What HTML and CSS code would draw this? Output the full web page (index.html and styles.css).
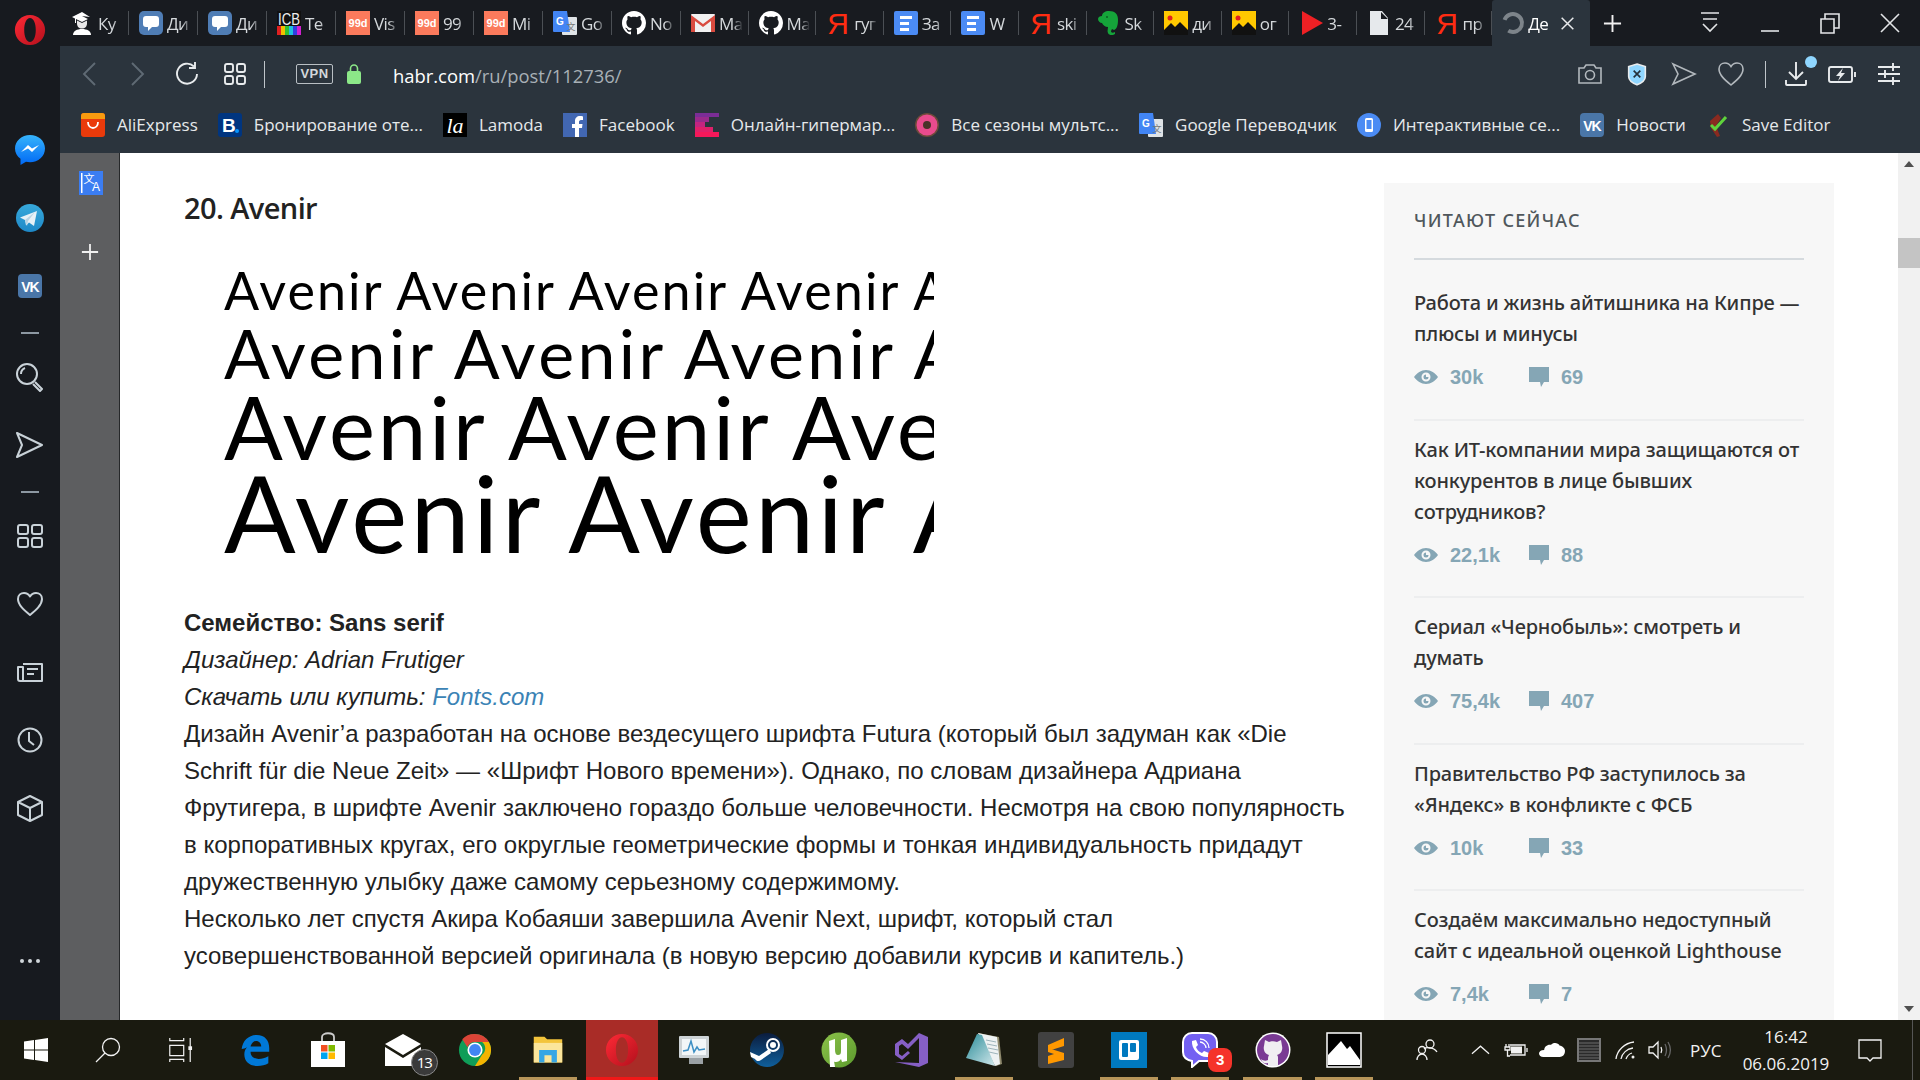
FILE: index.html
```html
<!DOCTYPE html>
<html lang="ru">
<head>
<meta charset="utf-8">
<title>Habr</title>
<link rel="stylesheet" href="styles.css">
</head>
<body>
<svg class="defs" aria-hidden="true">
  <defs>
    <linearGradient id="g-op" x1="0" y1="0" x2="1" y2="1"><stop offset="0" stop-color="#ff2a36"/><stop offset="1" stop-color="#b3101c"/></linearGradient>
    <linearGradient id="g-ms" x1="0" y1="0" x2="0" y2="1"><stop offset="0" stop-color="#36b4fb"/><stop offset="1" stop-color="#0068f5"/></linearGradient>
    <linearGradient id="g-tg" x1="0" y1="0" x2="0" y2="1"><stop offset="0" stop-color="#37a9db"/><stop offset="1" stop-color="#1e88c7"/></linearGradient>
    <linearGradient id="g-st" x1="0" y1="0" x2="0" y2="1"><stop offset="0" stop-color="#0b1c3d"/><stop offset="1" stop-color="#0f5f9c"/></linearGradient>
    <linearGradient id="g-ut" x1="0" y1="0" x2="1" y2="1"><stop offset="0" stop-color="#8cc24a"/><stop offset="1" stop-color="#5c9a2d"/></linearGradient>
    <linearGradient id="g-np" x1="0" y1="0" x2="1" y2="1"><stop offset="0" stop-color="#2a8c98"/><stop offset="1" stop-color="#d2e8ec"/></linearGradient>
    <symbol id="opera" viewBox="0 0 36 36"><path fill="url(#g-op)" fill-rule="evenodd" d="M18 1C8.500 1 1 8.600 1 18s7.500 17 17 17 17-7.600 17-17S27.500 1 18 1zm0 3.500c4 0 6.500 6 6.500 13.500S22 31.500 18 31.500 11.500 25.500 11.500 18 14 4.500 18 4.500z"/></symbol>
    <symbol id="student" viewBox="0 0 24 24"><path fill="#fff" d="M12 1 2 6l3 1.500V12h1V8l6 3 6-3-6-3 8 1z"/><path fill="#e8e8e8" d="M7 9.500v3c0 3 2 5 5 5s5-2 5-5v-3l-5 2.500z"/><path fill="#fff" d="M3 24c0-4 4-6 9-6s9 2 9 6z"/></symbol>
    <symbol id="chat" viewBox="0 0 24 24"><rect width="24" height="24" rx="5" fill="#4f7db5"/><path fill="#fff" d="M7 5h10a3 3 0 0 1 3 3v5a3 3 0 0 1-3 3h-4l-4 4v-4H7a3 3 0 0 1-3-3V8a3 3 0 0 1 3-3z"/></symbol>
    <symbol id="icb" viewBox="0 0 24 24"><rect width="24" height="24" fill="#111"/><text x="1" y="14" class="svg-t icb-t" textLength="22" lengthAdjust="spacingAndGlyphs">ICB</text><rect y="15" width="4" height="9" fill="#e02020"/><rect x="4" y="15" width="4" height="9" fill="#f0c000"/><rect x="8" y="15" width="4" height="9" fill="#30c030"/><rect x="12" y="15" width="4" height="9" fill="#20c0e0"/><rect x="16" y="15" width="4" height="9" fill="#3040e0"/><rect x="20" y="15" width="4" height="9" fill="#d020d0"/></symbol>
    <symbol id="d99" viewBox="0 0 24 24"><rect width="24" height="24" fill="#fb7a5c"/><text x="12" y="16" class="svg-t d99-t" text-anchor="middle">99d</text></symbol>
    <symbol id="gt" viewBox="0 0 24 24"><rect x="9" y="6" width="15" height="18" rx="1" fill="#dfe3e6"/><path fill="#4285f4" d="M1 0h13l3 21H1a1 1 0 0 1-1-1V1a1 1 0 0 1 1-1z"/><text x="7" y="14" class="svg-t gt-t" text-anchor="middle">G</text><text x="18" y="19" class="svg-t gt2-t" text-anchor="middle">文</text></symbol>
    <symbol id="gh" viewBox="0 0 16 16"><path fill="#fff" fill-rule="evenodd" d="M8 0C3.580 0 0 3.580 0 8c0 3.540 2.290 6.530 5.470 7.590.4.070.55-.17.55-.38 0-.19-.01-.82-.01-1.490-2.010.370-2.530-.49-2.690-.94-.09-.23-.48-.94-.82-1.130-.28-.15-.68-.52-.01-.53.63-.01 1.080.58 1.230.82.72 1.210 1.870.87 2.330.66.07-.52.28-.87.51-1.070-1.780-.2-3.640-.89-3.640-3.950 0-.87.31-1.590.82-2.150-.08-.2-.36-1.020.08-2.120 0 0 .67-.21 2.200.82.64-.18 1.320-.27 2-.27.68 0 1.360.09 2 .27 1.530-1.040 2.200-.82 2.200-.82.44 1.100.16 1.920.08 2.120.51.56.82 1.270.82 2.150 0 3.070-1.870 3.750-3.650 3.950.29.25.54.73.54 1.480 0 1.070-.01 1.930-.01 2.200 0 .21.15.46.55.38A8.013 8.013 0 0 0 16 8c0-4.420-3.580-8-8-8z"/></symbol>
    <symbol id="gmail" viewBox="0 0 24 24"><rect y="3" width="24" height="18" rx="1" fill="#f1f1f1"/><path fill="#d94b3f" d="M0 4l12 9 12-9v17h-4V10l-8 6-8-6v11H0z"/></symbol>
    <symbol id="ya" viewBox="0 0 24 24"><text x="12" y="23" class="svg-t ya-t" text-anchor="middle">Я</text></symbol>
    <symbol id="doc" viewBox="0 0 24 24"><rect width="24" height="24" rx="2" fill="#4b8bf4"/><path fill="#fff" d="M6 5h12v3H6zM6 11h9v3H6zM6 17h9v3H6z"/></symbol>
    <symbol id="ever" viewBox="0 0 24 24"><path fill="#15a43a" d="M5 5c0-3 3-5 7-5 6 0 9 3 9 9 0 5-1 9-4 10l-2-1-1 2c0 2 2 2 4 1v2c-1 1-6 2-7-1-1-2 0-4 0-6-3 0-5-2-6-4-2 0-4-2-4-4 0-2 2-3 4-3z"/><circle cx="10" cy="6" r="1" fill="#0a5c20"/></symbol>
    <symbol id="pic" viewBox="0 0 24 24"><rect width="24" height="24" fill="#ffc800"/><circle cx="6" cy="7" r="2.500" fill="#e02020"/><path fill="#111" d="M0 19l7-7 4 4 5-5 8 8v5H0z"/></symbol>
    <symbol id="play" viewBox="0 0 24 24"><path fill="#ee2024" d="M3 0l21 12L3 24z"/></symbol>
    <symbol id="file" viewBox="0 0 24 24"><path fill="#e6e9ec" d="M3 0h12l6 7v17H3zM14 1v7h7z" fill-rule="evenodd"/></symbol>
    <symbol id="ali" viewBox="0 0 24 24"><rect width="24" height="24" rx="3" fill="#ea3a0b"/><path fill="#f99b0f" d="M0 3a3 3 0 0 1 3-3h18a3 3 0 0 1 3 3v3H0z"/><path fill="none" stroke="#fff" stroke-width="1.800" d="M7 9c0 8 10 8 10 0"/></symbol>
    <symbol id="book" viewBox="0 0 24 24"><rect width="24" height="24" rx="3" fill="#003580"/><text x="4" y="19" class="svg-t book-t">B</text><circle cx="19" cy="18" r="2" fill="#0896ff"/></symbol>
    <symbol id="lam" viewBox="0 0 24 24"><rect width="24" height="24" fill="#000"/><text x="12" y="20" class="svg-t lam-t" text-anchor="middle">la</text></symbol>
    <symbol id="fb" viewBox="0 0 24 24"><rect width="24" height="24" fill="#4267b2"/><path fill="#fff" d="M16 24v-9h3l.5-4H16V9c0-1 .5-2 2-2h2V3.500C19 3 18 3 17 3c-3 0-5 2-5 5v3H9v4h3v9z"/></symbol>
    <symbol id="hyper" viewBox="0 0 24 24"><path fill="#7b2d96" d="M0 0h24v4H0z"/><path fill="#9a2a8c" d="M0 4h14v5H0z"/><path fill="#c42480" d="M0 9h10v5H0z"/><path fill="#e0206a" d="M0 14h18v5H0z"/><path fill="#f5185a" d="M0 19h24v5H0z"/></symbol>
    <symbol id="donut" viewBox="0 0 24 24"><circle cx="12" cy="12" r="12" fill="#6d4a3a"/><circle cx="12" cy="12" r="10.500" fill="#e84b8d"/><circle cx="12" cy="12" r="4" fill="#4a3228"/></symbol>
    <symbol id="phone" viewBox="0 0 24 24"><circle cx="12" cy="12" r="12" fill="#4b8bf4"/><rect x="8" y="5" width="8" height="14" rx="1.500" fill="#fff"/><rect x="9.500" y="7" width="5" height="9" fill="#4b8bf4"/></symbol>
    <symbol id="vk" viewBox="0 0 24 24"><rect width="24" height="24" rx="4" fill="#4a76a8"/><text x="12" y="17.500" class="svg-t vk-t" text-anchor="middle">VK</text></symbol>
    <symbol id="save" viewBox="0 0 24 24"><path fill="#8a2a20" d="M4 8l8-7 3 4-5 8 4 10-3 1-6-9z"/><path fill="none" stroke="#5fd33c" stroke-width="3" d="M5 12l4 4L20 4"/></symbol>
    <symbol id="win" viewBox="0 0 24 24"><path fill="#fff" d="M0 3.500 10 2v9.500H0zM11 2l13-2v11.500H11zM0 12.500h10V22L0 20.500zM11 12.500h13V24l-13-2z"/></symbol>
    <symbol id="edge" viewBox="0 0 36 36"><path fill="#0078d7" d="M3 17C4 7 11 1 20 1c9 0 14 6 14 15v4H13c0 6 5 8 9 8 4 0 7-1 11-3v8c-3 2-8 3-12 3-9 0-15-5-15-13 0-3 1-6 3-8-2 1-4 2-6 2zM13 14h12c0-3-2-6-6-6-3 0-5 3-6 6z"/></symbol>
    <symbol id="store" viewBox="0 0 36 36"><path fill="none" stroke="#ccc" stroke-width="1.800" d="M12 9V5c0-5 12-5 12 0v4"/><path fill="#fff" d="M1 9h34v26H1z"/><path fill="#f25022" d="M11 13h6.500v6.500H11z"/><path fill="#7fba00" d="M18.500 13H25v6.500h-6.500z"/><path fill="#00a4ef" d="M11 20.500h6.500V27H11z"/><path fill="#ffb900" d="M18.500 20.500H25V27h-6.500z"/></symbol>
    <symbol id="mail" viewBox="0 0 36 36"><path fill="#fff" d="M0 12 18 2l18 10-18 11z"/><path fill="#fff" d="M0 15l18 11 18-11v19H0z"/></symbol>
    <symbol id="chrome" viewBox="0 0 36 36"><circle cx="18" cy="18" r="17" fill="#0f9d58"/><path fill="#db4437" d="M18 1a17 17 0 0 1 14.700 8.500H18a8.500 8.500 0 0 0-8 5.500L4.500 6.500A17 17 0 0 1 18 1z"/><path fill="#f4b400" d="M32.700 9.500A17 17 0 0 1 18 35l7.500-12a8.500 8.500 0 0 0 0-13.500z"/><circle cx="18" cy="18" r="8" fill="#fff"/><circle cx="18" cy="18" r="6.300" fill="#4285f4"/></symbol>
    <symbol id="folder" viewBox="0 0 36 36"><path fill="#f3c43b" d="M2 3h12l3 3h17v26H2z"/><path fill="#fbe59b" d="M2 10h32v22H2z"/><path fill="#37a6e4" d="M8 18h20v14h-6v-8h-8v8H8z"/></symbol>
    <symbol id="tm" viewBox="0 0 36 36"><rect x="2" y="4" width="30" height="22" rx="1" fill="#cdd3d6"/><rect x="5" y="7" width="24" height="16" fill="#f2f6f8"/><path fill="none" stroke="#3d8fc4" stroke-width="1.500" d="M6 19l5-1 3-9 3 11 3-5 2 3 6-1"/><rect x="12" y="26" width="14" height="6" fill="#9aa0a4"/></symbol>
    <symbol id="steam" viewBox="0 0 36 36"><circle cx="18" cy="18" r="17" fill="url(#g-st)"/><circle cx="24" cy="13" r="6" fill="none" stroke="#fff" stroke-width="2"/><circle cx="24" cy="13" r="3" fill="#fff"/><path fill="#fff" d="M1 20l9 4 10-7 2 4-10 7c-2 2-5 1-6-1l-4-2z"/></symbol>
    <symbol id="ut" viewBox="0 0 36 36"><circle cx="18" cy="18" r="17.500" fill="url(#g-ut)"/><path fill="#fff" d="M8 9l6-2v11c0 3 1 5 3 5s3-1 3-4V8l6-2v23l-5 1-1-3c-1 2-3 3-5 3-1 0-2 0-2-1l1 6h-5z"/></symbol>
    <symbol id="vs" viewBox="0 0 36 36"><path fill="#865fc5" d="M25 1l9 4v26l-9 4L1 30l24 1V6L14 17l-6-5-3 2v8l3 2 6-5 2 2-8 7-7-5V12l7-5 6 5z"/></symbol>
    <symbol id="np" viewBox="0 0 36 36"><path fill="#8f8a6e" d="M12 1l21 4 3 27-6 2z"/><path fill="#eef2f3" d="M12 1l19 4 3 27-5 2z"/><path stroke="#9db4bb" stroke-width="1" d="M20 8l10 2M21 12l10 2M22 16l10 2M23 20l9 2"/><path fill="url(#g-np)" d="M11 2l5 1 13 31L0 26z"/></symbol>
    <symbol id="subl" viewBox="0 0 36 36"><rect width="36" height="36" rx="3" fill="#414141"/><path fill="#ff9800" d="M26 6v8L10 19v-6zM10 16l16 5v7l-16 4v-8l6-2-6-2z"/></symbol>
    <symbol id="trello" viewBox="0 0 36 36"><rect width="36" height="36" fill="#0079bf"/><rect x="8" y="8" width="20" height="20" rx="2" fill="#fff"/><rect x="11" y="11" width="6" height="14" rx="1" fill="#0079bf"/><rect x="19" y="11" width="6" height="9" rx="1" fill="#0079bf"/></symbol>
    <symbol id="viber" viewBox="0 0 36 36"><path fill="#7360f2" stroke="#fff" stroke-width="2" d="M10 1h16c5 0 9 4 9 9v10c0 5-4 9-9 9h-9l-7 6v-6c-5-1-9-4-9-9V10c0-5 4-9 9-9z"/><path fill="#fff" d="M10 9l4-1 2 5-2 2c1 3 3 5 6 6l2-2 5 2-1 4c-8 1-17-8-16-16z"/><path fill="none" stroke="#fff" stroke-width="1.300" d="M18 7c5 0 9 4 9 9M18 10c3 0 6 3 6 6"/></symbol>
    <symbol id="ghp" viewBox="0 0 36 36"><circle cx="18" cy="18" r="17.500" fill="#fff"/><circle cx="18" cy="18" r="16" fill="#7a3a94"/><path fill="#f0eef2" d="M10 8l4 2c3-1 5-1 8 0l4-2 1 6c1 4-1 8-5 9 1 1 1 2 1 3v8h-10v-3c-3 1-6 0-7-4 2 2 5 2 7 1 0-2 0-3 1-5-4-1-6-5-5-9z"/></symbol>
    <symbol id="photo" viewBox="0 0 36 36"><rect x="1" y="1" width="34" height="34" fill="#000" stroke="#fff" stroke-width="1.500"/><path fill="#fff" d="M2 33V23L15 9l6 8 3-3 10 14v5z"/></symbol>
    <symbol id="eye" viewBox="0 0 24 16"><path fill="#85a6b5" fill-rule="evenodd" d="M12 1C7 1 3 4 0 8c3 4 7 7 12 7s9-3 12-7c-3-4-7-7-12-7zm0 2.500a4.500 4.500 0 1 1 0 9 4.500 4.500 0 0 1 0-9z"/><path fill="#85a6b5" d="M12 5.500a2.500 2.500 0 1 0 2.500 2.500H12z"/></symbol>
    <symbol id="cmt" viewBox="0 0 20 20"><path fill="#85a6b5" d="M0 0h20v15h-5l-3 5-1-5H0z"/></symbol>
  </defs>
</svg>

<div class="app">
  <div class="main">
    <aside class="sidebar">
      <svg class="side-opera"><use href="#opera"/></svg>
      <svg class="side-ico" viewBox="0 0 30 30"><path fill="url(#g-ms)" d="M15 0C6.700 0 0 6 0 13.500c0 4.300 2 7.800 5.500 10.200V30l5.500-3.200c1.300.3 2.700.4 4 .4 8.300 0 15-6 15-13.700S23.300 0 15 0z"/><path fill="#fff" d="M6 17l7-7 4 3.500L24 10l-7 7-4-3.500z"/></svg>
      <svg class="side-ico" viewBox="0 0 30 30"><circle cx="15" cy="15" r="14" fill="url(#g-tg)"/><path fill="#e6f1f7" d="M5 14.500 22 8l-3 15-5-3.500-3 3-1-5.500z"/><path fill="#b8d3e4" d="M10 17l10-8-7 9-1 5z"/></svg>
      <svg class="side-ico" viewBox="-3 -3 30 30"><use href="#vk" width="24" height="24"/></svg>
      <span class="side-dash"></span>
      <svg class="side-ico stroke" viewBox="0 0 30 30"><circle cx="12" cy="12" r="10"/><path d="M6 12c0-3 1.500-5 4-6M20 20l7 7-2 2-7-7"/></svg>
      <svg class="side-ico stroke" viewBox="0 0 30 30"><path d="M2 3l25 12L2 27l5-12z"/></svg>
      <span class="side-dash"></span>
      <svg class="side-ico stroke" viewBox="0 0 30 30"><rect x="3" y="4" width="10" height="9" rx="2"/><rect x="17" y="4" width="10" height="9" rx="2"/><rect x="3" y="17" width="10" height="9" rx="2"/><rect x="17" y="17" width="10" height="9" rx="2"/></svg>
      <svg class="side-ico stroke" viewBox="0 0 30 30"><path d="M15 26C9 21 3 16 3 10c0-4 3-6 6-6 2.500 0 4.500 1 6 3.500C16.500 5 18.500 4 21 4c3 0 6 2 6 6 0 6-6 11-12 16z"/></svg>
      <svg class="side-ico stroke" viewBox="0 0 30 30"><path d="M8 7h19v17H5a2 2 0 0 1-2-2V10h5v14M12 12h11M12 17h7"/></svg>
      <svg class="side-ico stroke" viewBox="0 0 30 30"><circle cx="15" cy="15" r="11.500"/><path d="M14 7v9l5 4"/></svg>
      <svg class="side-ico stroke" viewBox="0 0 30 30"><path d="M15 3l12 6v13l-12 6-12-6V9zM3 9l12 6 12-6M15 15v13"/></svg>
      <span class="side-dots"><i></i><i></i><i></i></span>
    </aside>

    <div class="browser">
      <div class="tabstrip">
        <div class="tab"><svg class="ti"><use href="#student"/></svg><span class="tt">Ку</span></div>
        <div class="tab"><svg class="ti"><use href="#chat"/></svg><span class="tt">Ди</span></div>
        <div class="tab"><svg class="ti"><use href="#chat"/></svg><span class="tt">Ди</span></div>
        <div class="tab"><svg class="ti"><use href="#icb"/></svg><span class="tt">Te</span></div>
        <div class="tab"><svg class="ti"><use href="#d99"/></svg><span class="tt">Vis</span></div>
        <div class="tab"><svg class="ti"><use href="#d99"/></svg><span class="tt">99</span></div>
        <div class="tab"><svg class="ti"><use href="#d99"/></svg><span class="tt">Mi</span></div>
        <div class="tab"><svg class="ti"><use href="#gt"/></svg><span class="tt">Go</span></div>
        <div class="tab"><svg class="ti"><use href="#gh"/></svg><span class="tt">No</span></div>
        <div class="tab nar"><svg class="ti"><use href="#gmail"/></svg><span class="tt">Ma</span></div>
        <div class="tab nar"><svg class="ti"><use href="#gh"/></svg><span class="tt">Ma</span></div>
        <div class="tab nar"><svg class="ti"><use href="#ya"/></svg><span class="tt">гуг</span></div>
        <div class="tab nar"><svg class="ti"><use href="#doc"/></svg><span class="tt">За</span></div>
        <div class="tab nar"><svg class="ti"><use href="#doc"/></svg><span class="tt">W</span></div>
        <div class="tab nar"><svg class="ti"><use href="#ya"/></svg><span class="tt">ski</span></div>
        <div class="tab nar"><svg class="ti"><use href="#ever"/></svg><span class="tt">Sk</span></div>
        <div class="tab nar"><svg class="ti"><use href="#pic"/></svg><span class="tt">ди</span></div>
        <div class="tab nar"><svg class="ti"><use href="#pic"/></svg><span class="tt">ог</span></div>
        <div class="tab nar"><svg class="ti"><use href="#play"/></svg><span class="tt">3-</span></div>
        <div class="tab nar"><svg class="ti"><use href="#file"/></svg><span class="tt">24</span></div>
        <div class="tab nar"><svg class="ti"><use href="#ya"/></svg><span class="tt">пр</span></div>
        <div class="tab-active">
          <svg class="ti" viewBox="0 0 24 24"><circle cx="12" cy="12" r="9" fill="none" stroke="#7d848a" stroke-width="4" stroke-dasharray="44 13" transform="rotate(200 12 12)"/></svg>
          <span class="tt">Де</span>
          <svg class="tx" viewBox="0 0 18 18"><path d="M2 2l14 14M16 2 2 16"/></svg>
        </div>
        <svg class="newtab" viewBox="0 0 20 20"><path d="M10 1v18M1 10h18"/></svg>
        <div class="winctl">
          <span class="wc"><svg viewBox="0 0 20 24"><path d="M1 2h18M3 8h14M3 13l7 7 7-7"/></svg></span>
          <span class="wc"><svg viewBox="0 0 20 24"><path d="M1 20h18"/></svg></span>
          <span class="wc"><svg viewBox="0 0 20 24"><path d="M1 8h13v14H1zM5 8V3h14v14h-5"/></svg></span>
          <span class="wc"><svg viewBox="0 0 20 24"><path d="M1 3l18 18M19 3 1 21"/></svg></span>
        </div>
      </div>

      <div class="toolbar">
        <div class="addr">
          <svg class="tb back dim" viewBox="0 0 30 30"><path d="M20 4 9 15l11 11"/></svg>
          <svg class="tb fwd dim" viewBox="0 0 30 30"><path d="M10 4l11 11-11 11"/></svg>
          <svg class="tb rel" viewBox="0 0 30 30"><path d="M25 15a10 10 0 1 1-3-7.500M23 3v6h-6"/></svg>
          <svg class="tb grid" viewBox="0 0 30 30"><rect x="5" y="5" width="8" height="8" rx="2"/><rect x="17" y="5" width="8" height="8" rx="2"/><rect x="5" y="17" width="8" height="8" rx="2"/><rect x="17" y="17" width="8" height="8" rx="2"/></svg>
          <span class="vsep first"></span>
          <span class="vpn">VPN</span>
          <svg class="lock" viewBox="0 0 14 20"><path fill="none" stroke="#8ce888" stroke-width="1.600" d="M3.500 8V4.500a3.500 3.500 0 0 1 7 0V8"/><rect y="7" width="14" height="13" rx="2" fill="#8ce888"/></svg>
          <span class="url"><b>habr.com</b>/ru/post/112736/</span>
          <div class="addr-right">
            <svg class="tb grey" viewBox="0 0 30 30"><path d="M4 9h5l2-3h8l2 3h5v15H4z"/><circle cx="15" cy="16" r="4.500"/></svg>
            <svg class="tb noline" viewBox="-3 -3 36 36"><path fill="#8fd6ff" d="M15 3l10 3v12c0 5-5 8-10 10C10 26 5 23 5 18V6z"/><path fill="none" stroke="#24303a" stroke-width="2" d="M11 11l8 8M19 11l-8 8"/></svg>
            <svg class="tb grey" viewBox="0 0 30 30"><path d="M4 5l22 10L4 25l5-10z"/></svg>
            <svg class="tb grey" viewBox="0 0 30 30"><path d="M15 26C9 21 3 16 3 10c0-4 3-6 6-6 2.500 0 4.500 1 6 3.500C16.500 5 18.500 4 21 4c3 0 6 2 6 6 0 6-6 11-12 16z"/></svg>
            <span class="vsep second"></span>
            <span class="dl"><svg class="tb" viewBox="0 0 30 30"><path d="M15 3v16M8 13l7 7 7-7M5 21v4a1 1 0 0 0 1 1h18a1 1 0 0 0 1-1v-4"/></svg><i class="dl-dot"></i></span>
            <svg class="tb" viewBox="0 0 30 30"><rect x="2" y="8" width="23" height="15" rx="2"/><path d="M28 13v5"/><path class="filled" d="M16 9l-7 8h4l-2 5 7-8h-4z"/></svg>
            <svg class="tb" viewBox="0 0 30 30"><path d="M4 8h22M4 15h22M4 22h22M19 4v8M11 11v8M19 18v8"/></svg>
          </div>
        </div>
        <div class="bookmarks">
          <div class="bm"><svg class="ti"><use href="#ali"/></svg><span class="bt">AliExpress</span></div>
          <div class="bm"><svg class="ti"><use href="#book"/></svg><span class="bt">Бронирование оте...</span></div>
          <div class="bm"><svg class="ti"><use href="#lam"/></svg><span class="bt">Lamoda</span></div>
          <div class="bm"><svg class="ti"><use href="#fb"/></svg><span class="bt">Facebook</span></div>
          <div class="bm"><svg class="ti"><use href="#hyper"/></svg><span class="bt">Онлайн-гипермар...</span></div>
          <div class="bm"><svg class="ti"><use href="#donut"/></svg><span class="bt">Все сезоны мультс...</span></div>
          <div class="bm"><svg class="ti"><use href="#gt"/></svg><span class="bt">Google Переводчик</span></div>
          <div class="bm"><svg class="ti"><use href="#phone"/></svg><span class="bt">Интерактивные се...</span></div>
          <div class="bm"><svg class="ti"><use href="#vk"/></svg><span class="bt">Новости</span></div>
          <div class="bm"><svg class="ti"><use href="#save"/></svg><span class="bt">Save Editor</span></div>
        </div>
      </div>

      <div class="view">
        <div class="panel">
          <svg class="panel-tr" viewBox="0 0 24 24"><rect width="24" height="24" fill="#3b7df2"/><rect x="2" y="2" width="1.500" height="20" fill="#fff"/><text x="10" y="12" class="svg-t pt1" text-anchor="middle">文</text><text x="17" y="20" class="svg-t pt2" text-anchor="middle">A</text></svg>
          <svg class="panel-add" viewBox="0 0 20 20"><path d="M10 1v18M1 10h18"/></svg>
        </div>
        <main class="page">
          <article class="article">
            <h2 class="art-h">20. Avenir</h2>
            <div class="sample">
              <div class="s1">Avenir Avenir Avenir Avenir Avenir</div>
              <div class="s2">Avenir Avenir Avenir Avenir</div>
              <div class="s3">Avenir Avenir Avenir</div>
              <div class="s4">Avenir Avenir Avenir</div>
            </div>
            <p class="body-text"><b>Семейство: Sans serif</b><br>
<i>Дизайнер: Adrian Frutiger</i><br>
<i>Скачать или купить: <a class="lnk">Fonts.com</a></i><br>
Дизайн Avenir’а разработан на основе вездесущего шрифта Futura (который был задуман как «Die<br>
Schrift für die Neue Zeit» — «Шрифт Нового времени»). Однако, по словам дизайнера Адриана<br>
Фрутигера, в шрифте Avenir заключено гораздо больше человечности. Несмотря на свою популярность<br>
в корпоративных кругах, его округлые геометрические формы и тонкая индивидуальность придадут<br>
дружественную улыбку даже самому серьезному содержимому.<br>
Несколько лет спустя Акира Кобаяши завершила Avenir Next, шрифт, который стал<br>
усовершенствованной версией оригинала (в новую версию добавили курсив и капитель.)</p>
          </article>
          <aside class="card">
            <h3 class="card-h">Читают сейчас</h3>
            <div class="item">
              <div class="it">Работа и жизнь айтишника на Кипре —<br>плюсы и минусы</div>
              <div class="st"><span class="sv"><svg class="eye"><use href="#eye"/></svg>30k</span><span class="sc"><svg class="cm"><use href="#cmt"/></svg>69</span></div>
            </div>
            <div class="item">
              <div class="it">Как ИТ-компании мира защищаются от<br>конкурентов в лице бывших<br>сотрудников?</div>
              <div class="st"><span class="sv"><svg class="eye"><use href="#eye"/></svg>22,1k</span><span class="sc"><svg class="cm"><use href="#cmt"/></svg>88</span></div>
            </div>
            <div class="item">
              <div class="it">Сериал «Чернобыль»: смотреть и<br>думать</div>
              <div class="st"><span class="sv"><svg class="eye"><use href="#eye"/></svg>75,4k</span><span class="sc"><svg class="cm"><use href="#cmt"/></svg>407</span></div>
            </div>
            <div class="item">
              <div class="it">Правительство РФ заступилось за<br>«Яндекс» в конфликте с ФСБ</div>
              <div class="st"><span class="sv"><svg class="eye"><use href="#eye"/></svg>10k</span><span class="sc"><svg class="cm"><use href="#cmt"/></svg>33</span></div>
            </div>
            <div class="item">
              <div class="it">Создаём максимально недоступный<br>сайт с идеальной оценкой Lighthouse</div>
              <div class="st"><span class="sv"><svg class="eye"><use href="#eye"/></svg>7,4k</span><span class="sc"><svg class="cm"><use href="#cmt"/></svg>7</span></div>
            </div>
          </aside>
        </main>
        <div class="scrollbar">
          <svg class="sb-arrow" viewBox="0 0 10 6"><path d="M5 0l5 6H0z"/></svg>
          <span class="sb-thumb"></span>
          <svg class="sb-arrow bottom" viewBox="0 0 10 6"><path d="M0 0h10L5 6z"/></svg>
        </div>
      </div>
    </div>
  </div>

  <footer class="taskbar">
    <span class="tk s"><svg class="k24"><use href="#win"/></svg></span>
    <span class="tk s"><svg class="k26 line" viewBox="0 0 26 26"><circle cx="16" cy="10" r="8.500"/><path d="M10 16 1 25"/></svg></span>
    <span class="tk s"><svg class="k26 line" viewBox="0 0 26 28"><path d="M2 1v3h15V1M2 9h15v11H2zM2 27v-3h15v3M24 1v26"/><rect class="filled" x="22" y="10" width="4" height="4"/></svg></span>
    <span class="tk first"><svg class="k32"><use href="#edge"/></svg></span>
    <span class="tk"><svg class="k36"><use href="#store"/></svg></span>
    <span class="tk mail"><svg class="k36"><use href="#mail"/></svg><em class="badge-g">13</em></span>
    <span class="tk"><svg class="k34"><use href="#chrome"/></svg></span>
    <span class="tk on"><svg class="k32"><use href="#folder"/></svg></span>
    <span class="tk active"><svg class="k34"><use href="#opera"/></svg></span>
    <span class="tk"><svg class="k36"><use href="#tm"/></svg></span>
    <span class="tk"><svg class="k36"><use href="#steam"/></svg></span>
    <span class="tk"><svg class="k36"><use href="#ut"/></svg></span>
    <span class="tk"><svg class="k36"><use href="#vs"/></svg></span>
    <span class="tk on"><svg class="k36"><use href="#np"/></svg></span>
    <span class="tk"><svg class="k36"><use href="#subl"/></svg></span>
    <span class="tk on"><svg class="k36"><use href="#trello"/></svg></span>
    <span class="tk on pull"><svg class="k36"><use href="#viber"/></svg><em class="badge-r">3</em></span>
    <span class="tk on"><svg class="k36"><use href="#ghp"/></svg></span>
    <span class="tk on pull"><svg class="k36"><use href="#photo"/></svg></span>
    <div class="tray">
      <svg class="tr-people line" viewBox="0 0 24 24"><circle cx="15" cy="6" r="4"/><circle cx="7" cy="12" r="3.500"/><path d="M9 11c2-2 10-2 13 3M2 22c0-3 2-6 5-6s5 3 5 6"/></svg>
      <svg class="tr-caret line" viewBox="0 0 20 10"><path d="M1 9l9-8 9 8"/></svg>
      <svg class="tr-bat line" viewBox="0 0 24 14"><path d="M6 2h15v10H6M23 5v4"/><rect class="filled" x="7" y="3.500" width="11" height="7"/><path d="M2 1v3M5 1v3M1 4h5v3H1zM3.500 7v6H6"/></svg>
      <svg class="tr-cloud" viewBox="0 0 30 18"><path fill="#fff" d="M6 9c0-4 4-7 8-6 2-3 8-3 10 1 3 0 6 3 6 6 0 5-3 7-6 7H5c-3 0-5-2-5-4s2-4 6-4z"/></svg>
      <svg class="tr-grid" viewBox="0 0 24 24"><rect width="24" height="24" fill="#777"/><rect x="2" y="2" width="20" height="20" fill="#2a2a2a"/><path stroke="#6a6a6a" stroke-width="1" d="M2 5h20M2 8h20M2 11h20M2 14h20M2 17h20M2 20h20"/></svg>
      <svg class="tr-wifi line" viewBox="0 0 24 20"><path d="M1 19C2 10 10 3 19 2M6 19c1-6 6-10 12-11M11 19c1-3 3-5 6-6"/><circle class="filled" cx="18" cy="17" r="1.500"/></svg>
      <svg class="tr-spk line" viewBox="0 0 24 20"><path d="M1 7h4l5-5v16l-5-5H1zM13 7c1 2 1 4 0 6"/><path class="dimline" d="M17 4c2 4 2 8 0 12M20 2c3 5 3 11 0 16"/></svg>
      <span class="tr-lang">РУС</span>
      <div class="tr-clock"><span>16:42</span><span>06.06.2019</span></div>
      <svg class="tr-note line" viewBox="0 0 24 24"><path d="M1 2h22v18h-8l-3 3-3-3H1z"/></svg>
      <span class="tr-edge"></span>
    </div>
  </footer>
</div>
</body>
</html>
```

FILE: styles.css
```css
* { box-sizing: border-box; }
html, body { margin: 0; padding: 0; height: 100%; overflow: hidden; background: #fff; }
body { font-family: "Open Sans", "Noto Sans", sans-serif; }
.defs { position: absolute; width: 0; height: 0; overflow: hidden; }
.svg-t { font-family: "Liberation Sans", sans-serif; font-weight: 700; }
.icb-t { font-size: 17px; fill: #eee; font-weight: 400; }
.d99-t { font-size: 11px; fill: #fff; }
.gt-t { font-size: 10px; fill: #fff; }
.gt2-t { font-size: 9px; fill: #777; font-family: "Noto Sans CJK SC", sans-serif; font-weight: 400; }
.ya-t { font-size: 30px; fill: #ff2c12; font-weight: 400; }
.book-t { font-size: 19px; fill: #fff; }
.lam-t { font-size: 22px; fill: #fff; font-family: "Liberation Serif", serif; font-style: italic; font-weight: 400; }
.vk-t { font-size: 14px; fill: #fff; letter-spacing: -1px; }
.pt1 { font-size: 11px; fill: #fff; font-family: "Noto Sans CJK SC", sans-serif; font-weight: 400; }
.pt2 { font-size: 12px; fill: #fff; font-weight: 400; }

.app { display: flex; flex-direction: column; height: 1080px; width: 1920px; }
.main { display: flex; height: 1020px; }

/* left sidebar */
.sidebar { width: 60px; flex: none; background: #171a1f; display: flex; flex-direction: column; align-items: center; }
.side-opera { width: 32px; height: 32px; margin: 14px 0 0 -1px; flex: none; }
.side-ico { width: 30px; height: 30px; flex: none; margin-top: 38px; }
.side-opera + .side-ico { margin-top: 89px; }
.side-ico.stroke { fill: none; stroke: #c9d2d8; stroke-width: 2; stroke-linejoin: round; }
.side-dash { width: 18px; height: 2px; background: #8d98a2; margin-top: 31px; flex: none; }
.side-dash + .side-ico { margin-top: 28px; }
.side-dots { margin-top: auto; margin-bottom: 57px; display: flex; gap: 4px; }
.side-dots i { width: 4px; height: 4px; border-radius: 50%; background: #d0d6db; }

.browser { flex: 1; min-width: 0; display: flex; flex-direction: column; }

/* tab strip */
.tabstrip { height: 46px; flex: none; background: #181b20; display: flex; align-items: stretch; }
.tab { width: 69px; flex: none; display: flex; align-items: center; padding-left: 10px; }
.tab.nar { width: 67.6px; }
.tab::after { content: ""; width: 1px; height: 24px; background: #4b4f54; flex: none; }
.ti { width: 24px; height: 24px; flex: none; display: block; }
.tt { flex: 1; min-width: 0; overflow: hidden; white-space: nowrap; padding-left: 4px; margin-right: 5px; color: #d5d9dc; font-size: 17px; letter-spacing: -.6px;
  -webkit-mask-image: linear-gradient(90deg, #000 65%, transparent 100%); mask-image: linear-gradient(90deg, #000 65%, transparent 100%); }
.tab-active { width: 98px; flex: none; background: #2b343d; border-radius: 3px 3px 0 0; display: flex; align-items: center; padding-left: 9px; padding-right: 15px; }
.tab-active .tt { color: #fff; padding-left: 3px; margin-right: 0; }
.tx { width: 15px; height: 15px; flex: none; fill: none; stroke: #e8eaec; stroke-width: 1.800; }
.newtab { width: 19px; height: 19px; margin-left: 13px; align-self: center; flex: none; fill: none; stroke: #f0f0f0; stroke-width: 2; }
.winctl { margin-left: auto; display: flex; }
.wc { width: 60px; display: flex; align-items: center; justify-content: center; }
.wc svg { width: 20px; height: 24px; fill: none; stroke: #e3e5e7; stroke-width: 1.600; }

/* toolbar */
.toolbar { height: 107px; flex: none; background: #2b343d; display: flex; flex-direction: column; }
.addr { height: 56px; flex: none; display: flex; align-items: center; padding: 0 16px 0 15px; }
.tb { width: 30px; height: 30px; flex: none; fill: none; stroke: #e8ebed; stroke-width: 1.900; display: block; }
.tb.dim { stroke: #5f6a74; }
.tb.fwd { margin-left: 17px; }
.tb.rel { margin-left: 20px; }
.tb.grid { margin-left: 18px; }
.tb.grey { stroke: #b2b8bd; stroke-width: 1.600; }
.filled { fill: #e8ebed; stroke: none; }
.vsep { width: 1px; height: 27px; background: #bfc5ca; flex: none; }
.vsep.first { margin-left: 14px; }
.vsep.second { margin-left: 2px; margin-right: -2px; }
.vpn { width: 37px; height: 20px; margin-left: 31px; border: 1px solid #b9bfc4; border-radius: 2px; color: #d3d8db; font: 700 13px/18px "Liberation Sans", sans-serif; letter-spacing: .4px; text-align: center; flex: none; }
.lock { width: 14px; height: 20px; margin-left: 14px; flex: none; }
.url { margin-left: 32px; padding-top: 2px; font-size: 18.400px; color: #a8b0b6; white-space: nowrap; }
.url b { color: #fff; font-weight: 400; }
.addr-right { margin-left: auto; display: flex; align-items: center; gap: 17px; }
.dl { display: flex; position: relative; margin-right: -1px; }
.dl-dot { position: absolute; top: -3px; right: -6px; width: 12px; height: 12px; border-radius: 50%; background: #8fd6ff; }

.bookmarks { height: 46px; flex: none; display: flex; align-items: center; gap: 20px; padding-left: 21px; }
.bm { display: flex; align-items: center; gap: 12px; color: #e6e9eb; font-size: 17px; white-space: nowrap; flex: none; }
.bt { padding-bottom: 2px; }

/* content view */
.view { flex: 1; min-height: 0; display: flex; }
.panel { width: 60px; flex: none; background: #5d5e60; border-right: 1px solid #26282a; display: flex; flex-direction: column; align-items: center; padding-top: 18px; }
.panel-tr { width: 24px; height: 24px; margin-left: 2px; flex: none; }
.panel-add { width: 18px; height: 18px; margin-top: 48px; fill: none; stroke: #f0f0f0; stroke-width: 2; flex: none; }

.page { flex: 1; min-width: 0; overflow: hidden; background: #fff; display: flex; align-items: flex-start; }
.article { width: 1264px; flex: none; padding: 35px 0 0 64px; color: #222; }
.art-h { margin: 0; font: 600 29px/40px "Open Sans", sans-serif; color: #222; letter-spacing: -.6px; }
.sample { width: 710px; margin: 33px 0 0 40px; overflow: hidden; color: #000; font-family: Lato, sans-serif; font-weight: 400; white-space: nowrap; height: 295px; }
.s1 { font-size: 52px; line-height: 59px; letter-spacing: 2.100px; }
.s2 { font-size: 68px; line-height: 66px; letter-spacing: 3.400px; }
.s3 { font-size: 87px; line-height: 82px; letter-spacing: 2.900px; }
.s4 { font-size: 106px; line-height: 88px; letter-spacing: 3.300px; }
.body-text { margin: 48px 0 0; font: 400 24px/37px "Liberation Sans", sans-serif; color: #222; white-space: nowrap; }
.lnk { color: #3b83b5; }

.card { width: 450px; flex: none; margin-top: 30px; background: #f7f7f7; padding: 22px 30px 0; font-family: "Noto Sans", sans-serif; }
.card-h { margin: 0 0 14px; padding-bottom: 23px; border-bottom: 2px solid #d5dade; font: 500 18px/30px "Noto Sans", sans-serif; color: #50575c; text-transform: uppercase; letter-spacing: 1.300px; }
.item { padding: 13px 0 29.500px; border-bottom: 2px solid #edeeef; }
.it { font-size: 20px; line-height: 31px; font-weight: 500; color: #333; white-space: nowrap; letter-spacing: -.17px; }
.st { display: flex; align-items: center; height: 24px; margin-top: 16px; color: #85a6b5; font: 700 20px/24px "Liberation Sans", sans-serif; }
.sv { width: 115px; display: flex; align-items: center; flex: none; }
.sc { display: flex; align-items: center; }
.eye { width: 24px; height: 16px; margin-right: 12px; flex: none; }
.cm { width: 20px; height: 20px; margin-right: 12px; flex: none; }

.scrollbar { width: 22px; flex: none; background: #f1f1f1; display: flex; flex-direction: column; align-items: center; }
.sb-arrow { width: 10px; height: 6px; margin-top: 8px; fill: #505050; flex: none; }
.sb-arrow.bottom { margin-top: auto; margin-bottom: 8px; }
.sb-thumb { width: 22px; height: 30px; margin-top: 71px; background: #c4c4c4; flex: none; }

/* taskbar */
.taskbar { height: 60px; flex: none; background: #1a1a10; display: flex; align-items: stretch; }
.tk { width: 72.400px; flex: none; position: relative; display: flex; align-items: center; justify-content: center; }
.tk.s { width: 72px; }
.tk.first { margin-left: 3px; }
.tk.mail { margin-left: 3px; }
.tk.pull { margin-left: -1px; }
.tk.on::after { content: ""; position: absolute; left: 7px; right: 7px; bottom: 0; height: 3px; background: #b8965a; }
.tk.active { background: #a92c27; margin-left: 2px; }
.tk.active::after { content: ""; position: absolute; left: 0; right: 0; bottom: 0; height: 3px; background: #f01818; }
.k24 { width: 24px; height: 24px; }
.k26 { width: 26px; height: 26px; }
.k32 { width: 32px; height: 32px; }
.k34 { width: 34px; height: 34px; }
.k36 { width: 36px; height: 36px; }
.line { fill: none; stroke: #f2f2f2; stroke-width: 1.300; }
.line .filled { fill: #f2f2f2; stroke: none; }
.dimline { stroke: #666; }
.badge-g { position: absolute; left: 44px; top: 29px; width: 27px; height: 27px; border-radius: 50%; background: #3a3a3a; border: 1px solid #888; color: #fff; font: 400 15px/25px "Open Sans", sans-serif; text-align: center; letter-spacing: -1px; }
.badge-r { position: absolute; left: 44px; top: 28px; width: 24px; height: 24px; border-radius: 8px; background: #f5332a; color: #fff; font: 700 15px/24px "Liberation Sans", sans-serif; text-align: center; }

.tray { margin-left: auto; display: flex; align-items: center; color: #f2f2f2; }
.tr-people { width: 24px; height: 24px; flex: none; margin-right: 32px; }
.tr-caret { width: 19px; height: 10px; flex: none; margin-right: 14px; }
.tr-bat { width: 24px; height: 16px; flex: none; margin-right: 11px; }
.tr-cloud { width: 26px; height: 16px; flex: none; margin-right: 12px; }
.tr-grid { width: 24px; height: 24px; flex: none; margin-right: 14px; }
.tr-wifi { width: 24px; height: 20px; flex: none; margin-right: 9px; }
.tr-spk { width: 24px; height: 20px; flex: none; margin-right: 18px; }
.tr-lang { font-size: 17px; width: 36px; flex: none; margin-right: 10px; white-space: nowrap; }
.tr-clock { width: 100px; flex: none; display: flex; flex-direction: column; align-items: center; font-size: 17px; line-height: 27px; }
.tr-note { width: 24px; height: 24px; flex: none; margin-left: 22px; margin-right: 30px; }
.tr-edge { width: 1px; height: 60px; background: #555; flex: none; margin-right: 7px; }
```
